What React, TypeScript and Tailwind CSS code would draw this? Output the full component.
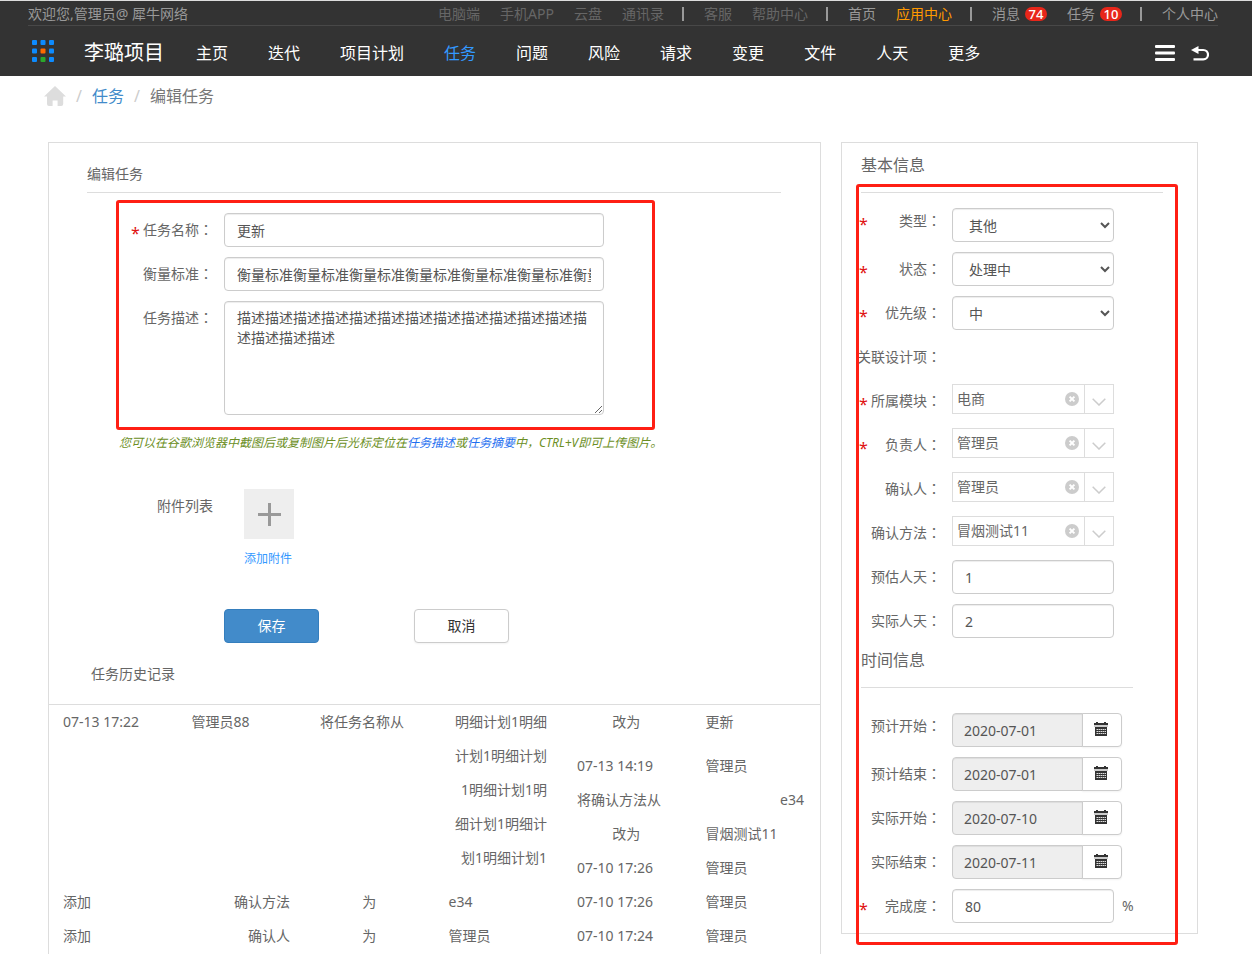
import type { ReactNode } from "react";

const navItems = ["主页", "迭代", "项目计划", "任务", "问题", "风险", "请求", "变更", "文件", "人天", "更多"];

const inputClass =
  "block h-[34px] rounded-[4px] border border-[#ccc] bg-white px-3 text-sm text-[#555] shadow-[inset_0_1px_1px_rgba(0,0,0,0.075)] outline-none";

const cellClass = "pl-3.5 pr-4 align-top font-normal";

function HomeIcon() {
  return (
    <svg viewBox="0 0 22 20" className="h-5 w-[22px] fill-[#ddd]" aria-hidden="true">
      <path d="M11 0 22 10.6H19.2V18a2 2 0 0 1-2 2H13.6V14.6H8.6V20H5a2 2 0 0 1-2-2V10.6H0Z" />
    </svg>
  );
}

function GridLogo() {
  const dots = ["#0d8bff", "#0d8bff", "#0d8bff", "#0d8bff", "#ff6a00", "#0d8bff", "#0d8bff", "#2ba82b", "#0d8bff"];
  return (
    <svg viewBox="0 0 24 24" className="size-6" aria-hidden="true">
      {dots.map((color, i) => (
        <rect key={i} x={1 + (i % 3) * 8.5} y={1 + Math.floor(i / 3) * 8.5} width="5" height="5" rx="1" fill={color} />
      ))}
    </svg>
  );
}

function CalendarIcon() {
  return (
    <svg viewBox="0 0 14 14" className="size-3.5" shapeRendering="crispEdges" aria-hidden="true">
      <path d="M2 0h2v1h6V0h2v1h2v2H0V1h2Z" fill="#333" />
      <path d="M0 3h14v2H0Z" fill="#ccc" />
      <path d="M1 5h12v9H1Z" fill="#333" />
      <path d="M2 7h10v1H2zM2 9h10v1H2zM2 11h10v1H2z" fill="#888" />
      <path d="M3 7h1v1H3zM5 7h1v1H5zM7 7h1v1H7zM9 7h1v1H9zM11 7h1v1h-1zM3 9h1v1H3zM5 9h1v1H5zM7 9h1v1H7zM9 9h1v1H9zM11 9h1v1h-1zM3 11h1v1H3zM5 11h1v1H5zM7 11h1v1H7zM9 11h1v1H9zM11 11h1v1h-1z" fill="#ddd" />
    </svg>
  );
}

function ClearIcon() {
  return (
    <svg viewBox="0 0 14 14" className="size-3.5" aria-hidden="true">
      <circle cx="7" cy="7" r="7" fill="#ccc" />
      <path d="m4.6 4.6 4.8 4.8M9.4 4.6 4.6 9.4" stroke="#fff" strokeWidth="2" />
    </svg>
  );
}

function Separator() {
  return <span className="-ml-0.5 h-3.5 w-0.5 bg-[#999]" />;
}

function Badge({ children }: { children: ReactNode }) {
  return (
    <span className="flex h-3.5 w-[22px] items-center justify-center rounded-full bg-[#e8261a] text-[13px] font-medium text-white">
      {children}
    </span>
  );
}

type RowProps = { id?: string; label: string; required?: boolean; first?: boolean; children?: ReactNode };

function Row({ id, label, required, first, children }: RowProps) {
  const text = (
    <>
      {label}
      <span lang="zh-TW" className="font-['Noto_Sans_CJK_TC',sans-serif]">：</span>
    </>
  );
  const lineHeight = first ? "h-6 leading-6" : "h-8 leading-8";
  return (
    <div className="flex min-h-[34px] items-start">
      <span className={`w-2.5 shrink-0 pl-0.5 pt-1 text-base text-[#e01010] ${lineHeight}`}>{required && "*"}</span>
      <div className={`mr-[11px] flex w-[74px] shrink-0 justify-end whitespace-nowrap ${lineHeight}`}>
        {id ? <label htmlFor={id}>{text}</label> : <span>{text}</span>}
      </div>
      {children}
    </div>
  );
}

function SelectField({ id, value }: { id: string; value: string }) {
  return (
    <select id={id} className={`${inputClass} w-[162px] pr-1`} defaultValue={value}>
      <option>{value}</option>
    </select>
  );
}

function ComboField({ id, value }: { id: string; value: string }) {
  return (
    <div className="flex h-[30px] w-[162px] border border-[#ddd]">
      <input id={id} defaultValue={value} className="w-0 flex-1 pl-1 text-sm text-[#666] outline-none" />
      <button type="button" aria-label="清除" className="mr-[5px] w-3.5">
        <ClearIcon />
      </button>
      <button type="button" aria-label="展开" className="flex w-[29px] items-center justify-center border-l border-[#ddd] pt-1.5">
        <svg viewBox="0 0 14 8" className="h-2 w-3.5" fill="none" stroke="#ccc" strokeWidth="1.5" aria-hidden="true">
          <path d="m0.7 0.7 6.3 6.3 6.3-6.3" />
        </svg>
      </button>
    </div>
  );
}

function DateField({ id, value }: { id: string; value: string }) {
  return (
    <div className="flex">
      <input
        id={id}
        readOnly
        defaultValue={value}
        className="h-[34px] w-[131px] rounded-l-[4px] border border-[#ccc] bg-[#eee] pl-[11px] pr-3 text-sm text-[#555] shadow-[inset_0_1px_1px_rgba(0,0,0,0.075)] outline-none"
      />
      <button
        type="button"
        aria-label="选择日期"
        className="-ml-px flex h-[34px] w-10 items-center justify-center rounded-r-[4px] border border-[#ccc] bg-white pb-0.5 pr-0.5 shadow-[0_1px_2px_rgba(0,0,0,0.05)]"
      >
        <CalendarIcon />
      </button>
    </div>
  );
}

function Header() {
  return (
    <header className="border-t border-[#ddd] bg-[#333] pl-7 pr-[34px]">
      <div className="flex h-[25px] items-center justify-between border-b border-[#484848] pt-0.5 text-sm text-[#999]">
        <span>欢迎您,管理员@ 犀牛网络</span>
        <div className="flex items-center gap-5">
          <a href="#" className="text-[#666]">电脑端</a>
          <a href="#" className="text-[#666]">手机APP</a>
          <a href="#" className="text-[#666]">云盘</a>
          <a href="#" className="text-[#666]">通讯录</a>
          <Separator />
          <a href="#" className="text-[#666]">客服</a>
          <a href="#" className="text-[#666]">帮助中心</a>
          <Separator />
          <a href="#">首页</a>
          <a href="#" className="text-[#ff9900]">应用中心</a>
          <Separator />
          <a href="#" className="flex items-center gap-[5px]">消息 <Badge>74</Badge></a>
          <a href="#" className="flex items-center gap-[5px]">任务 <Badge>10</Badge></a>
          <Separator />
          <a href="#">个人中心</a>
        </div>
      </div>
      <div className="flex h-[50px] items-center pl-[3px] text-white">
        <GridLogo />
        <span className="ml-[29px] pt-1 text-xl">李璐项目</span>
        <nav className="ml-8 flex gap-10 pt-1 text-base">
          {navItems.map((item) => (
            <a key={item} href="#" className={item === "任务" ? "text-[#3399ff]" : ""}>{item}</a>
          ))}
        </nav>
        <div className="ml-auto mr-[9px] flex items-center gap-4 pt-1">
          <button type="button" aria-label="菜单">
            <svg viewBox="0 0 20 16" className="h-4 w-5 fill-white" aria-hidden="true">
              <rect width="20" height="3" rx="1" />
              <rect y="6.5" width="20" height="3" rx="1" />
              <rect y="13" width="20" height="3" rx="1" />
            </svg>
          </button>
          <button type="button" aria-label="返回">
            <svg viewBox="0 0 18 16" className="h-4 w-[18px]" aria-hidden="true">
              <path d="M0 5 7.5 1V9Z" fill="#fff" />
              <path d="M7 5h5.3a4.6 4.6 0 0 1 0 9.4H2.5" fill="none" stroke="#fff" strokeWidth="2.2" />
            </svg>
          </button>
        </div>
      </div>
    </header>
  );
}

function History() {
  return (
    <table className="w-full table-fixed border-t border-[#ddd] text-left leading-[34px]">
      <tbody>
        <tr className="h-11">
          <td className={cellClass}>07-13 17:22</td>
          <td className={cellClass}>管理员88</td>
          <td className={cellClass}>将任务名称从</td>
          <td rowSpan={5} className={`${cellClass} text-right`}>
            明细计划1明细计划1明细计划1明细计划1明细计划1明细计划1明细计划1
          </td>
          <td className={`${cellClass} text-center`}>改为</td>
          <td className={cellClass}>更新</td>
        </tr>
        <tr>
          <td colSpan={3} rowSpan={4} />
          <td className={cellClass}>07-13 14:19</td>
          <td className={cellClass}>管理员</td>
        </tr>
        <tr>
          <td className={cellClass}>将确认方法从</td>
          <td className={`${cellClass} text-right`}>e34</td>
        </tr>
        <tr>
          <td className={`${cellClass} text-center`}>改为</td>
          <td className={cellClass}>冒烟测试11</td>
        </tr>
        <tr>
          <td className={cellClass}>07-10 17:26</td>
          <td className={cellClass}>管理员</td>
        </tr>
        <tr>
          <td className={cellClass}>添加</td>
          <td className={`${cellClass} text-right`}>确认方法</td>
          <td className={`${cellClass} text-center`}>为</td>
          <td className={cellClass}>e34</td>
          <td className={cellClass}>07-10 17:26</td>
          <td className={cellClass}>管理员</td>
        </tr>
        <tr>
          <td className={cellClass}>添加</td>
          <td className={`${cellClass} text-right`}>确认人</td>
          <td className={`${cellClass} text-center`}>为</td>
          <td className={cellClass}>管理员</td>
          <td className={cellClass}>07-10 17:24</td>
          <td className={cellClass}>管理员</td>
        </tr>
      </tbody>
    </table>
  );
}

function TaskPanel() {
  return (
    <section className="min-w-0 flex-1 self-stretch border border-b-0 border-[#ddd]">
      <h2 className="ml-[38px] mr-[39px] border-b border-[#ddd] pb-2 pt-5 leading-[21px]">编辑任务</h2>

      <div className="ml-[67px] mt-[7px] flex max-w-[539px] flex-col gap-2.5 rounded-[3px] border-3 border-[#ff1f14] px-2.5 pb-3 pt-2.5">
        <Row id="name" label="任务名称" required>
          <input id="name" defaultValue="更新" className={`${inputClass} w-[380px]`} />
        </Row>
        <Row id="standard" label="衡量标准">
          <input
            id="standard"
            defaultValue="衡量标准衡量标准衡量标准衡量标准衡量标准衡量标准衡量标准"
            className={`${inputClass} w-[380px]`}
          />
        </Row>
        <Row id="desc" label="任务描述">
          <textarea
            id="desc"
            defaultValue="描述描述描述描述描述描述描述描述描述描述描述描述描述描述描述描述"
            className="block h-[114px] w-[380px] rounded-[4px] border border-[#ccc] px-3 py-1.5 text-sm leading-5 text-[#555] shadow-[inset_0_1px_1px_rgba(0,0,0,0.075)] outline-none"
          />
        </Row>
      </div>
      <p className="ml-[70px] mt-[3px] text-xs leading-5 italic text-[#6b8e23]">
        您可以在谷歌浏览器中截图后或复制图片后光标定位在<span className="text-[#1e6ff0]">任务描述</span>或
        <span className="text-[#1e6ff0]">任务摘要</span>中，CTRL+V即可上传图片。
      </p>

      <div className="ml-[108px] mt-9 flex">
        <span className="w-[87px] leading-[34px]">附件列表</span>
        <button type="button" className="flex flex-col items-start gap-2.5 text-xs leading-5 text-[#3399ff]">
          <span className="flex size-[50px] items-center justify-center bg-[#eee]">
            <svg viewBox="0 0 23 23" className="size-[23px]" aria-hidden="true">
              <path d="M10 0h3v10h10v3H13v10h-3V13H0v-3h10Z" fill="#999" />
            </svg>
          </span>
          添加附件
        </button>
      </div>

      <div className="ml-[175px] mt-10 flex gap-[95px]">
        <button type="submit" className="h-[34px] w-[95px] rounded-[4px] border border-[#357ebd] bg-[#428bca] text-sm text-white">
          保存
        </button>
        <button type="button" className="h-[34px] w-[95px] rounded-[4px] border border-[#ccc] bg-white text-sm text-[#333] shadow-[0_1px_2px_rgba(0,0,0,0.05)]">
          取消
        </button>
      </div>

      <h3 className="ml-[42px] pb-5 pt-5 leading-[21px]">任务历史记录</h3>
      <History />
    </section>
  );
}

function InfoPanel() {
  return (
    <section className="relative w-[357px] shrink-0 border border-[#ddd] pb-2.5 pl-[15px] pr-[34px]">
      <h2 className="ml-1 border-b border-[#ddd] pb-[15px] pt-2.5 text-base">基本信息</h2>
      <div className="mt-[15px] flex flex-col gap-2.5">
        <Row id="type" label="类型" required first>
          <SelectField id="type" value="其他" />
        </Row>
        <Row id="status" label="状态" required>
          <SelectField id="status" value="处理中" />
        </Row>
        <Row id="priority" label="优先级" required>
          <SelectField id="priority" value="中" />
        </Row>
        <Row label="关联设计项" />
        <Row id="module" label="所属模块" required>
          <ComboField id="module" value="电商" />
        </Row>
        <Row id="owner" label="负责人" required>
          <ComboField id="owner" value="管理员" />
        </Row>
        <Row id="confirmer" label="确认人">
          <ComboField id="confirmer" value="管理员" />
        </Row>
        <Row id="method" label="确认方法">
          <ComboField id="method" value="冒烟测试11" />
        </Row>
        <Row id="estimate" label="预估人天">
          <input id="estimate" defaultValue="1" className={`${inputClass} w-[162px]`} />
        </Row>
        <Row id="actual" label="实际人天">
          <input id="actual" defaultValue="2" className={`${inputClass} w-[162px]`} />
        </Row>
      </div>

      <h2 className="ml-1 mr-[30px] border-b border-[#ddd] pb-[15px] pt-2.5 text-base">时间信息</h2>
      <div className="mt-[25px] flex flex-col gap-2.5">
        <Row id="plan-start" label="预计开始" first>
          <DateField id="plan-start" value="2020-07-01" />
        </Row>
        <Row id="plan-end" label="预计结束">
          <DateField id="plan-end" value="2020-07-01" />
        </Row>
        <Row id="real-start" label="实际开始">
          <DateField id="real-start" value="2020-07-10" />
        </Row>
        <Row id="real-end" label="实际结束">
          <DateField id="real-end" value="2020-07-11" />
        </Row>
        <Row id="progress" label="完成度" required>
          <input id="progress" defaultValue="80" className={`${inputClass} w-[162px]`} />
          <span className="ml-2 leading-[34px]">%</span>
        </Row>
      </div>

      {/* highlight frame drawn over the panel */}
      <div className="pointer-events-none absolute -bottom-3 left-3.5 right-[19px] top-[41px] rounded-[3px] border-3 border-[#ff1f14]" />
    </section>
  );
}

export default function App() {
  return (
    <div className="flex min-h-screen flex-col bg-white font-['Noto_Sans','Noto_Sans_CJK_SC',sans-serif] text-sm text-[#666]" lang="zh-CN">
      <Header />
      <nav className="flex items-center pl-11 pt-2 text-base leading-6" aria-label="breadcrumb">
        <a href="#" aria-label="首页"><HomeIcon /></a>
        <span className="w-[26px] text-center text-[#ccc]">/</span>
        <a href="#" className="text-[#428bca]">任务</a>
        <span className="w-[26px] text-center text-[#ccc]">/</span>
        <span className="text-[#777]">编辑任务</span>
      </nav>
      <main className="flex flex-1 items-start gap-5 pl-12 pr-[54px] pt-[34px]">
        <TaskPanel />
        <InfoPanel />
      </main>
    </div>
  );
}
